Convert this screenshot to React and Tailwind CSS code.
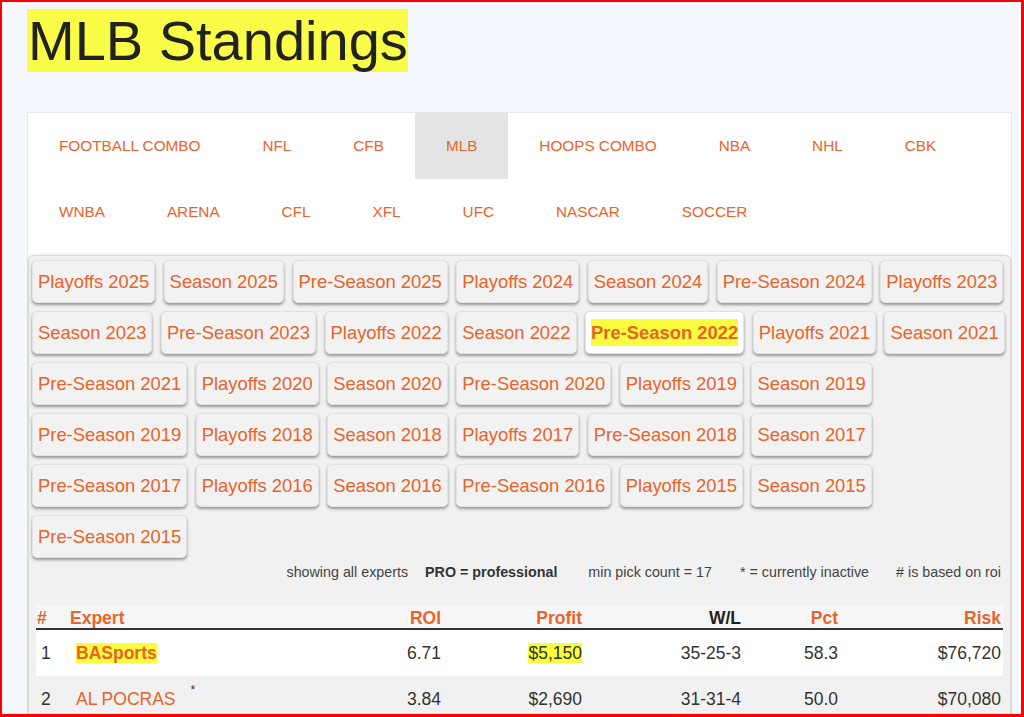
import React from "react";

const tabsRow = [
  "FOOTBALL COMBO", "NFL", "CFB", "MLB", "HOOPS COMBO", "NBA", "NHL", "CBK",
  "WNBA", "ARENA", "CFL", "XFL", "UFC", "NASCAR", "SOCCER",
];

const seasons = [
  "Playoffs 2025", "Season 2025", "Pre-Season 2025", "Playoffs 2024", "Season 2024", "Pre-Season 2024", "Playoffs 2023",
  "Season 2023", "Pre-Season 2023", "Playoffs 2022", "Season 2022", "Pre-Season 2022", "Playoffs 2021", "Season 2021",
  "Pre-Season 2021", "Playoffs 2020", "Season 2020", "Pre-Season 2020", "Playoffs 2019", "Season 2019",
  "Pre-Season 2019", "Playoffs 2018", "Season 2018", "Playoffs 2017", "Pre-Season 2018", "Season 2017",
  "Pre-Season 2017", "Playoffs 2016", "Season 2016", "Pre-Season 2016", "Playoffs 2015", "Season 2015",
  "Pre-Season 2015",
];

const cols = "grid grid-cols-[30px_234px_141px_141px_159px_97px_163px]";

export default function App() {
  return (
    <div className="w-[1024px] h-[717px] overflow-hidden bg-[#f5f8ff] border-l-2 border-t-2 border-r-[3px] border-b-[3px] border-[#ff0000] font-['Liberation_Sans',Arial,sans-serif]">
      <div className="pl-[25px] pt-[8px]">
        <h1 className="text-[56px] leading-[62px] font-normal text-[#222]">
          <span className="bg-[#fafd47] pl-[1px]">MLB Standings</span>
        </h1>

        <div className="mt-[40px] w-[985px] bg-white border border-[#e8e8e8]">
          <div className="flex flex-wrap pb-[10px]">
            {tabsRow.map((t) => (
              <div
                key={t}
                className={`h-[66px] px-[31px] flex items-center text-[15.3px] text-[#e8642a] ${t === "MLB" ? "bg-[#e4e4e4]" : ""}`}
              >
                {t}
              </div>
            ))}
          </div>

          <div className="bg-[#f1f1f1] border border-[#d9d9d9] rounded-t-[6px] shadow-[0_0_3px_rgba(0,0,0,0.12)] pb-[60px]">
            <div className="flex flex-wrap gap-x-[8.5px] gap-y-[8px] pl-[3px] pt-[4px]">
              {seasons.map((s) => {
                const active = s === "Pre-Season 2022";
                return (
                  <div
                    key={s}
                    className={`h-[43px] px-[5px] flex items-center rounded-[5px] border border-[#e2e2e2] text-[18.4px] text-[#e8642a] shadow-[0_2px_3px_rgba(0,0,0,0.38)] ${active ? "bg-white font-bold" : "bg-[#f2f2f2]"}`}
                  >
                    {active ? <span className="bg-[#f9fd3e]">{s}</span> : s}
                  </div>
                );
              })}
            </div>

            <div className="px-[7px]">
              <div className="mt-[6px] pr-[2px] flex justify-end text-[14.3px] leading-[16px] text-[#444]">
                <span>showing all experts</span>
                <span className="ml-[17px] font-bold text-[#333]">PRO = professional</span>
                <span className="ml-[31px]">min pick count = 17</span>
                <span className="ml-[28px]">* = currently inactive</span>
                <span className="ml-[27px]">
                  # is based on roi
                </span>
              </div>

              <div className="mt-[25px] text-[17.5px]">
                <div className={`${cols} h-[25px] items-center bg-[#f6f6f6] border-b-2 border-[#333] font-bold text-[#e8642a]`}>
                  <div className="pl-[1px]">#</div>
                  <div className="pl-[4px]">Expert</div>
                  <div className="text-right">ROI</div>
                  <div className="text-right">Profit</div>
                  <div className="text-right text-[#222]">W/L</div>
                  <div className="text-right">Pct</div>
                  <div className="text-right">Risk</div>
                </div>

                <div className={`${cols} h-[46px] items-center bg-white text-[#333]`}>
                  <div className="pl-[5px]">1</div>
                  <div className="pl-[10px]">
                    <span className="bg-[#f9fd3e] font-bold text-[#e8642a]">BASports</span>
                  </div>
                  <div className="text-right">6.71</div>
                  <div className="text-right">
                    <span className="bg-[#f9fd3e]">$5,150</span>
                  </div>
                  <div className="text-right">35-25-3</div>
                  <div className="text-right">58.3</div>
                  <div className="text-right">$76,720</div>
                </div>

                <div className={`${cols} h-[46px] items-center text-[#333]`}>
                  <div className="pl-[5px]">2</div>
                  <div className="pl-[10px] flex items-start">
                    <span className="text-[#e8642a]">AL POCRAS</span>
                    <span className="ml-[15px] text-[12px] leading-[12px] -mt-[2px]">*</span>
                  </div>
                  <div className="text-right">3.84</div>
                  <div className="text-right">$2,690</div>
                  <div className="text-right">31-31-4</div>
                  <div className="text-right">50.0</div>
                  <div className="text-right">$70,080</div>
                </div>
              </div>
            </div>
          </div>
        </div>
      </div>
    </div>
  );
}
